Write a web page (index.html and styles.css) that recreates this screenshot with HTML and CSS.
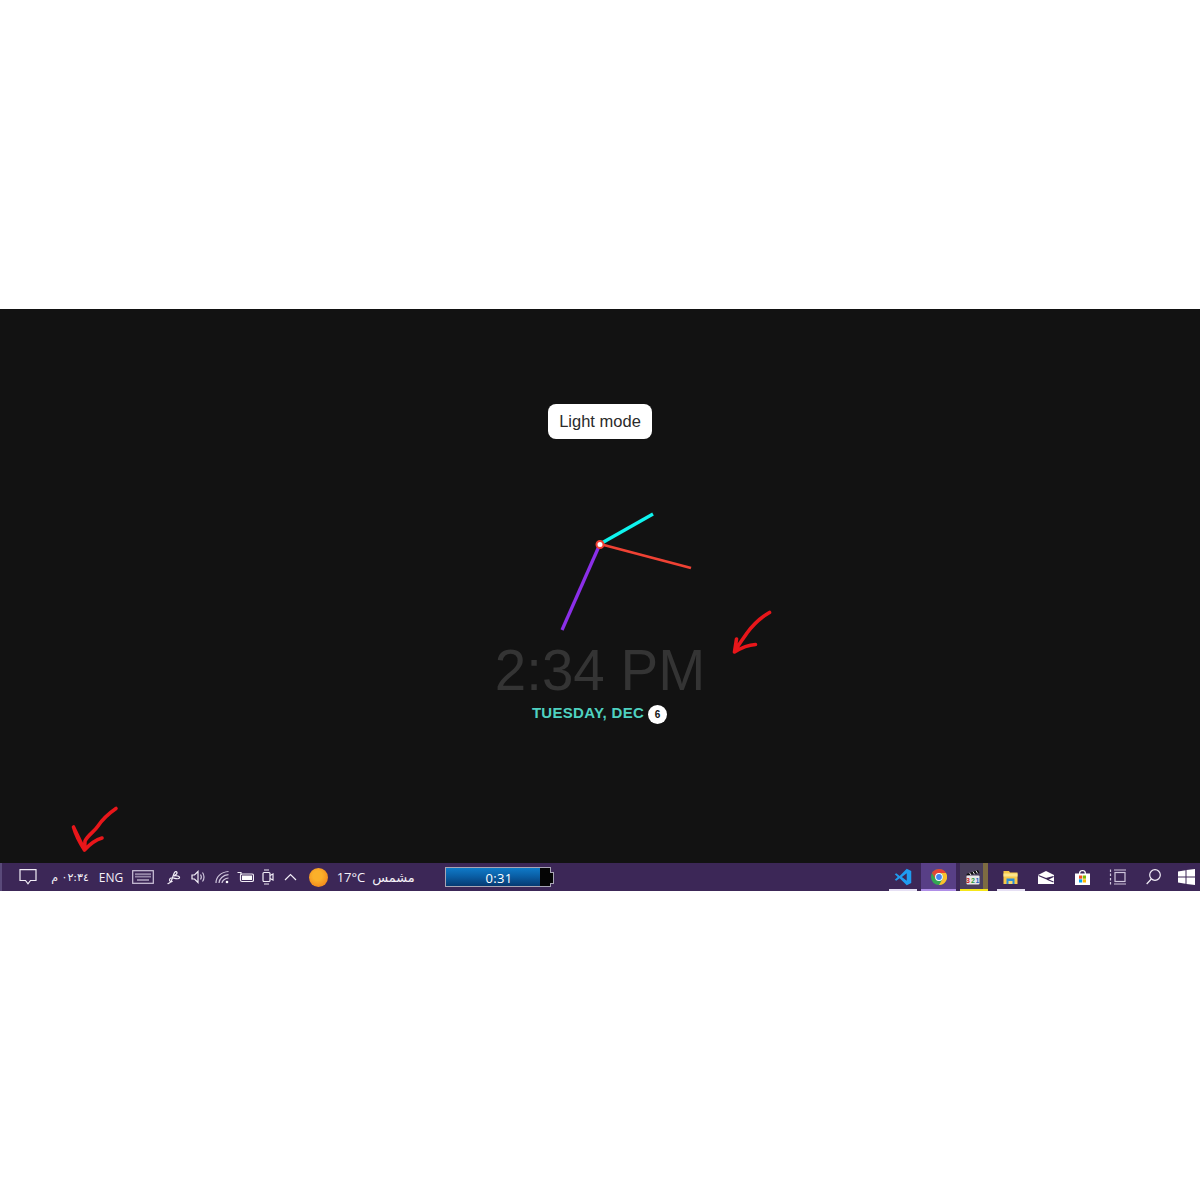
FILE: index.html
```html
<!DOCTYPE html>
<html lang="en">
<head>
<meta charset="utf-8">
<title>Clock</title>
<link rel="stylesheet" href="styles.css">
</head>
<body>
<main class="panel">
  <button class="mode" type="button">Light mode</button>
  <svg class="clock" width="200" height="140" viewBox="500 500 200 140">
    <line class="hand hour" x1="600" y1="544" x2="653" y2="514"/>
    <line class="hand minute" x1="600" y1="544" x2="691" y2="568"/>
    <line class="hand second" x1="600" y1="544" x2="562" y2="630"/>
    <circle class="pivot" cx="600" cy="544.500" r="3.500"/>
  </svg>
  <div class="time">2:34 PM</div>
  <div class="date"><span class="date-text">TUESDAY, DEC</span><b class="day">6</b></div>
  <svg class="scribble scribble-a" width="44" height="48" viewBox="730 608 44 48"><path d="M769.5 612.5C760 618 753 625 747 633C743 639 739 644 735 651M736.5 639L734.5 652C741 648 748 645 755.500 644.500"/></svg>
  <svg class="scribble scribble-b" width="50" height="50" viewBox="70 804 50 50"><path d="M116 808.500C108 814 102 820 98 826C94 832 88 835 85 841L84.500 850L73.500 827C76 836 80 843 84.500 850C90 844 95 840 102 838"/></svg>
</main>
<footer class="taskbar">
  <div class="tray">
    <span class="cell"><svg width="18" height="16" viewBox="0 0 18 16"><path class="ln" d="M1 .7H17V11.500H11.500L9 14.800 6.500 11.500H1Z"/></svg></span>
    <span class="cell txt ar" dir="rtl">٠٢:٣٤ م</span>
    <span class="cell txt">ENG</span>
    <span class="cell"><svg width="22" height="14" viewBox="0 0 22 14"><rect class="ln dim" x=".7" y=".7" width="20.600" height="12.600"/><path class="ln dim keys" d="M3 4.200H19M3 6.700H19M5 10H17"/></svg></span>
    <span class="cell"><svg width="15" height="15" viewBox="0 0 15 15"><path class="ln" d="M1.500 13.500C3 14 4.500 12.500 5.500 10.500L8 3.500C8.800 1.500 10.500 1 11 2.500C11.500 4 9.500 5 8 5.800C10 5.500 14 6 13.500 7.800C13 9.500 9.500 8.500 7.500 8C6 7.500 3.500 8 3.500 10C3.500 11.500 5.500 12.500 6.500 11"/></svg></span>
    <span class="cell"><svg width="15" height="14" viewBox="0 0 15 14"><path class="ln" d="M1 5H3.500L7 1.500V12.500L3.500 9H1Z"/><path class="ln dim" d="M9.500 4.500C10.500 6 10.500 8 9.500 9.500M11.500 2.500C13.500 5 13.500 9 11.500 11.500"/></svg></span>
    <span class="cell"><svg width="15" height="14" viewBox="0 0 15 14"><path class="ln dim" d="M1 13C1 7 6 2 13.500 1.500M4 13C4 9 8 5 13.500 4.700M7 13C7 11 10 8 13.500 8"/><circle class="fillw" cx="12" cy="12" r="1.300"/></svg></span>
    <span class="cell"><svg width="17" height="12" viewBox="0 0 17 12"><rect class="ln" x="3.500" y="3" width="13" height="7.500" rx="1.500"/><rect class="fillw" x="5" y="4.500" width="10" height="4.500"/><path class="ln" d="M.5 1.500H4V4"/></svg></span>
    <span class="cell"><svg width="12" height="16" viewBox="0 0 12 16"><rect class="ln" x="1" y="3.500" width="7" height="9" rx="1"/><path class="ln" d="M8 6.500L11 5V11L8 9.500M2 1H7M2 15H7"/></svg></span>
    <span class="cell"><svg width="13" height="8" viewBox="0 0 13 8"><path class="ln" d="M1 7L6.500 1.500 12 7"/></svg></span>
    <span class="cell"><i class="sun"></i></span>
    <span class="cell txt big">17°C</span>
    <span class="cell txt big ar" lang="ar" dir="rtl">مشمس</span>
  </div>
  <div class="gauge"><div class="gauge-fill">0:31</div><div class="gauge-rest"></div></div>
  <div class="apps">
    <span class="app app-vs on-light"><svg width="18" height="18" viewBox="0 0 24 24"><path class="vs" fill-rule="evenodd" d="M17 1L7.500 10.500 3 7 1 8.300 5 12 1 15.700 3 17 7.500 13.500 17 23 23 20V4ZM17 7V17L10.500 12Z"/></svg></span>
    <span class="app app-chrome"><svg width="16" height="16" viewBox="0 0 16 16"><circle cx="8" cy="8" r="8" fill="#34a853"/><path d="M8 0A8 8 0 0 1 15 4H8A4 4 0 0 0 4.300 6.300L1.800 2.800A8 8 0 0 1 8 0Z" fill="#ea4335"/><path d="M1.800 2.800A8 8 0 0 0 1 4L4.500 10 4.300 6.300Z" fill="#ea4335"/><path d="M15 4A8 8 0 0 1 8 16L11.500 10A4 4 0 0 0 11.500 6L10 4Z" fill="#fbc02d"/><circle cx="8" cy="8" r="3.900" fill="#fff"/><circle cx="8" cy="8" r="2.900" fill="#4285f4"/></svg></span>
    <span class="app app-clap"><svg width="14" height="16" viewBox="0 0 14 16"><path d="M.5 5L12 1 13.500 4 1 6.500Z" fill="#111"/><path d="M3.500 3.800L5 6M7 2.700L8.500 5.200M10 1.700L11.500 4.300" stroke="#eee" fill="none"/><rect x=".5" y="6.500" width="13" height="9" rx="1" fill="#e8e8e8"/><text class="clap-num" x="2" y="14">3</text><text class="clap-num two" x="7" y="14">2</text><text class="clap-num one" x="11.500" y="14">1</text></svg></span>
    <span class="app on-light"><svg width="15" height="15" viewBox="0 0 15 15"><path d="M.5 1H6L7 2.500H14.500V14H.5Z" fill="#f7c948"/><rect x=".5" y="3.500" width="14" height="3" fill="#fde58b"/><rect x="3.500" y="8.500" width="8" height="5.500" fill="#2a8fd8"/><rect x="5.500" y="11" width="4" height="3" fill="#f7d970"/></svg></span>
    <span class="app"><svg width="16" height="13" viewBox="0 0 16 13"><path class="fillw" d="M0 4L8 0 16 4V13H0Z"/><path class="slot" d="M.5 4.500L8 7.500 15.500 5.500 9.500 8.500 15.500 11"/></svg></span>
    <span class="app"><svg width="15" height="15" viewBox="0 0 15 15"><path class="fillw" fill-rule="evenodd" d="M0 3.500H4C4 .5 6 0 7.500 0S11 .5 11 3.500H15V15H0ZM5.200 3.500H9.800C9.800 1.700 8.700 1.200 7.500 1.200S5.200 1.700 5.200 3.500Z"/><rect x="4" y="5.500" width="3.200" height="3.200" fill="#f25022"/><rect x="7.800" y="5.500" width="3.200" height="3.200" fill="#7fba00"/><rect x="4" y="9.300" width="3.200" height="3.200" fill="#00a4ef"/><rect x="7.800" y="9.300" width="3.200" height="3.200" fill="#ffb900"/></svg></span>
    <span class="app"><svg width="17" height="16" viewBox="0 0 17 16"><rect class="ln dim" x="6" y="3.500" width="10" height="9"/><path class="ln dim" d="M5 1H17M5 15H17M1.500 .5V3M1.500 4.500V7M1.500 9V11.500M1.500 13V15.500"/></svg></span>
    <span class="app"><svg width="15" height="16" viewBox="0 0 15 16"><circle class="ln" cx="9" cy="6" r="5.300"/><path class="ln" d="M5.300 10L.7 15"/></svg></span>
    <span class="app app-win"><svg width="17" height="16" viewBox="0 0 17 16"><path class="fillw" d="M0 2.400L7.500 1.300V7.500H0ZM8.500 1.100L17 0V7.500H8.500ZM0 8.500H7.500V14.700L0 13.600ZM8.500 8.500H17V16L8.500 14.900Z"/></svg></span>
  </div>
</footer>
</body>
</html>
```
FILE: styles.css
```css
* { box-sizing: border-box; }
html, body { margin: 0; background: #fff; }
body { padding-top: 309px; height: 1200px; position: relative; font-family: "Liberation Sans", Arial, sans-serif; }

.panel { height: 554px; background: #121212; display: flex; flex-direction: column; align-items: center; padding-top: 95px; }
.mode { width: 104px; height: 35px; background: #fff; color: #2a2a2a; border: 0; border-radius: 8px; font: 16.500px "Liberation Sans", Arial, sans-serif; padding: 0; }
.clock { margin-top: 61px; flex: none; }
.hand { stroke-linecap: butt; }
.hour { stroke: #0ff4ee; stroke-width: 3.300; }
.minute { stroke: #f04234; stroke-width: 2.800; }
.second { stroke: #8b2fe8; stroke-width: 3.300; }
.pivot { fill: #fff; stroke: #ef4033; stroke-width: 2; }
.time { margin-top: -1px; font-size: 56.500px; line-height: 64px; color: #343434; white-space: nowrap; }
.date { margin-top: -2px; margin-right: 1px; height: 24px; display: flex; align-items: center; gap: 4px; color: #4fd1c0; font-weight: 700; font-size: 15px; letter-spacing: .3px; }
.date-text { margin-top: -2px; }
.day { width: 19px; height: 19px; border-radius: 50%; background: #fff; color: #111; font-size: 10px; letter-spacing: 0; display: flex; align-items: center; justify-content: center; margin-top: 2px; }

.scribble { position: absolute; fill: none; stroke: #e8161a; stroke-width: 3.600; stroke-linecap: round; stroke-linejoin: round; }
.scribble-a { left: 730px; top: 608px; }
.scribble-b { left: 70px; top: 804px; }

.taskbar { height: 28px; background: #3c2757; border-left: 2px solid #5a4a7a; display: flex; align-items: center; color: #fff; font-family: "Open Sans", "DejaVu Sans", sans-serif; }
.tray { display: grid; grid-template-columns: 27px 58px 24px 39px 22px 28px 21px 24px 22px 22px 34px 32px 53px; height: 100%; margin-left: 12px; }
.cell { display: flex; align-items: center; justify-content: center; white-space: nowrap; }
.txt { font-size: 12px; color: #f5f2f9; }
.big { font-size: 13px; }
.ar { font-family: "DejaVu Sans", sans-serif; font-size: 11px; }
.big.ar { font-size: 13px; }
.ln { fill: none; stroke: #f2eef7; stroke-width: 1.200; }
.dim { stroke: #cfc6dc; }
.keys { stroke-width: 1.800; opacity: .6; }
.fillw { fill: #fff; }
.slot { fill: none; stroke: #3c2757; stroke-width: 1.200; }
.sun { display: block; width: 19px; height: 19px; border-radius: 50%; background: radial-gradient(circle at 45% 40%, #fbb02a 30%, #f28a1c 75%, #ea6a18); }

.gauge { width: 106px; height: 20px; margin-left: 25px; border: 1px solid #a9a5b5; display: flex; position: relative; background: #050505; }
.gauge::after { content: ""; position: absolute; right: -4px; top: 4px; width: 3px; height: 10px; border: 1px solid #a9a5b5; border-left: 0; background: #050505; }
.gauge-fill { width: 94px; padding-left: 12px; background: linear-gradient(#0f7ac8, #0a5fa6 45%, #063a72); text-align: center; font-size: 13px; line-height: 20px; letter-spacing: .3px; }
.gauge-rest { flex: 1; }

.apps { margin-left: auto; height: 100%; display: flex; }
.app { width: 35.600px; height: 100%; display: flex; align-items: center; justify-content: center; position: relative; }
.on-light::after, .app-chrome::after, .app-clap::after { content: ""; position: absolute; left: 4px; right: 4px; bottom: 0; height: 2px; background: #e6e0f4; }
.app-vs { width: 36px; }
.app-chrome { width: 35px; background: #583f86; }
.app-chrome::after { left: 0; right: 0; background: #b08fe8; }
.app-clap { margin: 0 5px 0 4px; width: 28px; background: linear-gradient(90deg, #4a3f5c 0, #4a3f5c 82%, #7d6c42 82%); padding-right: 2px; }
.app-clap::after { left: 0; right: 0; background: #f6e71a; }
.clap-num { font: 700 7px "Liberation Sans", Arial, sans-serif; fill: #c22; text-anchor: middle; }
.two { fill: #2a9a3a; }
.one { fill: #2a5fc0; }
.vs { fill: #1f9cf0; }
.app-win { width: 29px; padding-left: 2px; }
```
